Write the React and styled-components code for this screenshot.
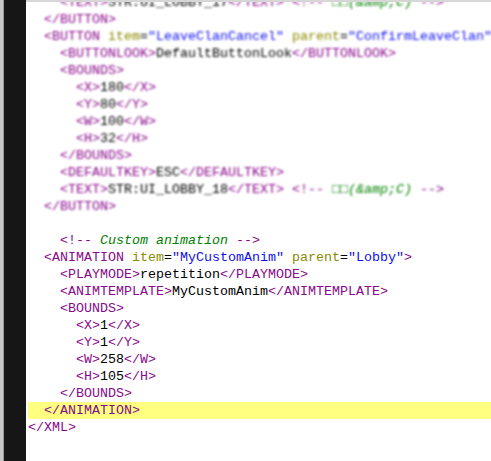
import React from "react";
import styled, { createGlobalStyle } from "styled-components";

const Global = createGlobalStyle`
  html, body { margin: 0; padding: 0; background: #ffffff; }
  body { width: 491px; height: 461px; overflow: hidden; }
`;

const Frame = styled.div`
  display: flex;
  width: 491px;
  height: 461px;
  overflow: hidden;
`;

const SideStrip = styled.div`
  width: 3px;
  flex: none;
  background: #c8c8c8;
  border-right: 1px solid #9a9a9a;
`;

const Gutter = styled.div`
  width: 22px;
  flex: none;
  background: #161616;
`;

const Editor = styled.div`
  flex: 1;
  min-width: 0;
  background: #ffffff;
  border-top: 2px solid #d6d6d6;
  padding-left: 2px;
  overflow: hidden;
`;

const Code = styled.div`
  margin-top: -8px;
  font-family: "Liberation Mono", "Courier New", monospace;
  font-size: 13.33px;
`;

const Block = styled.div`
  filter: ${(p) => (p.$blurred ? "blur(0.9px)" : "none")};
`;

const Line = styled.div`
  height: 17px;
  line-height: 17px;
  white-space: pre;
  background: ${(p) => (p.$active ? "#ffff80" : "transparent")};
`;

const colors = {
  tag: "#8a0a8a",
  attr: "#8a8a00",
  val: "#1010f0",
  eq: "#000000",
  text: "#000000",
  cmt: "#008000",
};

const Token = styled.span`
  color: ${(p) => colors[p.$kind]};
  font-style: ${(p) => (p.$kind === "cmt" ? "italic" : "normal")};
`;

function tokenize(line) {
  const out = [];
  const re = /(<!--)(.*?)(-->)|(<\/?[A-Za-z]+)|(\s+[a-z]+)(?==)|(=)|("[^"]*")|(\/?>)|([^<>"=]+)/g;
  let m;
  while ((m = re.exec(line))) {
    if (m[1]) out.push(["tag", m[1]], ["cmt", m[2]], ["tag", m[3]]);
    else if (m[4]) out.push(["tag", m[4]]);
    else if (m[5]) out.push(["attr", m[5]]);
    else if (m[6]) out.push(["eq", m[6]]);
    else if (m[7]) out.push(["val", m[7]]);
    else if (m[8]) out.push(["tag", m[8]]);
    else out.push(["text", m[9]]);
  }
  return out;
}

const blurredLines = [
  '    <TEXT>STR:UI_LOBBY_17</TEXT> <!-- \u25A1\u25A1(&amp;C) -->',
  "  </BUTTON>",
  '  <BUTTON item="LeaveClanCancel" parent="ConfirmLeaveClan">',
  "    <BUTTONLOOK>DefaultButtonLook</BUTTONLOOK>",
  "    <BOUNDS>",
  "      <X>180</X>",
  "      <Y>80</Y>",
  "      <W>100</W>",
  "      <H>32</H>",
  "    </BOUNDS>",
  "    <DEFAULTKEY>ESC</DEFAULTKEY>",
  '    <TEXT>STR:UI_LOBBY_18</TEXT> <!-- \u25A1\u25A1(&amp;C) -->',
  "  </BUTTON>",
];

const clearLines = [
  "",
  "    <!-- Custom animation -->",
  '  <ANIMATION item="MyCustomAnim" parent="Lobby">',
  "    <PLAYMODE>repetition</PLAYMODE>",
  "    <ANIMTEMPLATE>MyCustomAnim</ANIMTEMPLATE>",
  "    <BOUNDS>",
  "      <X>1</X>",
  "      <Y>1</Y>",
  "      <W>258</W>",
  "      <H>105</H>",
  "    </BOUNDS>",
  "  </ANIMATION>",
  "</XML>",
];

const ACTIVE = "  </ANIMATION>";

function CodeLine({ text, active }) {
  return (
    <Line $active={active}>
      {text === "" ? " " : tokenize(text).map(([k, t], i) => (
        <Token key={i} $kind={k}>{t}</Token>
      ))}
    </Line>
  );
}

export default function App() {
  return (
    <>
      <Global />
      <Frame>
        <SideStrip />
        <Gutter />
        <Editor>
          <Code>
            <Block $blurred>
              {blurredLines.map((l, i) => (
                <CodeLine key={i} text={l} />
              ))}
            </Block>
            <Block>
              {clearLines.map((l, i) => (
                <CodeLine key={i} text={l} active={l === ACTIVE} />
              ))}
            </Block>
          </Code>
        </Editor>
      </Frame>
    </>
  );
}
